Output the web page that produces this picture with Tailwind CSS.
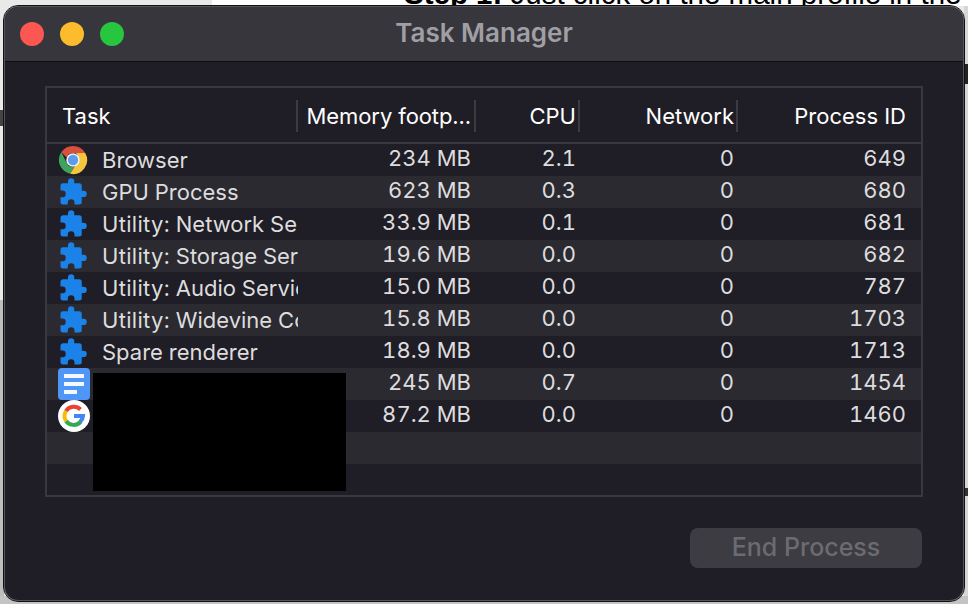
<!DOCTYPE html>
<html lang="en">

<head>
	<meta charset="UTF-8" />
	<title>Task Manager</title>
	<script src="https://cdn.jsdelivr.net/npm/@tailwindcss/browser@4"></script>
</head>

<body class="bg-[#e9e9e9] font-['Inter','Noto_Sans',sans-serif]">
	<svg class="hidden">
		<symbol id="puzzle" viewBox="0 0 24 24">
			<path fill="#1a82e8" d="M20.5 11H19V7a2 2 0 0 0-2-2h-4V3.5a2.5 2.5 0 0 0-5 0V5H4a2 2 0 0 0-2 2v3.8h1.5a2.7 2.7 0 0 1 0 5.4H2V20a2 2 0 0 0 2 2h3.8v-1.5a2.7 2.7 0 0 1 5.4 0V22H17a2 2 0 0 0 2-2v-4h1.5a2.5 2.5 0 0 0 0-5z" />
		</symbol>
	</svg>

	<div class="relative w-[968px] h-[604px] overflow-hidden">
		<!-- page behind the window -->
		<div class="absolute left-[212px] top-0 w-[756px] h-[6px] bg-white"></div>
		<div class="absolute left-[404px] top-[-23px] font-['Liberation_Sans'] text-[29.5px] leading-[34px] text-black whitespace-nowrap"><b>Step 1:</b> Just click on the main profile in the</div>
		<div class="absolute left-[964px] top-[6px] w-[4px] h-[598px] bg-[#d6d6d6]"></div>
		<div class="absolute left-0 top-[300px] w-[4px] h-[304px] bg-[#bdbdbd]"></div>
		<div class="absolute left-0 top-[596px] w-[968px] h-[8px] bg-[#c4c4c4]"></div>
		<div class="absolute left-[964px] top-[64px] w-[4px] h-[20px] bg-[#222]"></div>
		<div class="absolute left-[964px] top-[488px] w-[4px] h-[8px] bg-[#333]"></div>
		<div class="absolute left-0 top-[110px] w-[4px] h-[16px] bg-[#444]"></div>

		<!-- window -->
		<div class="absolute left-[4px] top-[6px] w-[960px] h-[595px] flex flex-col rounded-[14px] overflow-hidden bg-[#1f1d25] border border-[#55545a] outline outline-[#111]">
			<div class="relative h-[55px] flex items-center justify-center bg-[#37363c] border-b border-[#0c0c0e] shrink-0">
				<div class="absolute left-[15px] top-[15px] flex gap-[16px]">
					<span class="w-[24px] h-[24px] rounded-full bg-[#fc5753]"></span>
					<span class="w-[24px] h-[24px] rounded-full bg-[#fdbc2e]"></span>
					<span class="w-[24px] h-[24px] rounded-full bg-[#27c63f]"></span>
				</div>
				<span class="text-[26px] leading-[32px] pb-[2px] font-semibold text-[#a09fa3]">Task Manager</span>
			</div>

			<div class="relative flex-1 px-[40px] pt-[24px]">
				<div class="border-2 border-[#39383e] h-[411px] flex flex-col">
					<div class="h-[56px] pt-[2px] shrink-0 grid grid-cols-[251px_178px_104px_158px_1fr] items-center border-b-2 border-[#39383e] text-[22px] text-white">
						<div class="h-[32px] flex items-center pl-[15px] border-r-2 border-[#3c3b41]">Task</div>
						<div class="h-[32px] flex items-center justify-end pr-[3px] border-r-2 border-[#3c3b41] whitespace-nowrap tracking-[-0.1px]">Memory footp...</div>
						<div class="h-[32px] flex items-center justify-end pr-[2px] border-r-2 border-[#3c3b41]">CPU</div>
						<div class="h-[32px] flex items-center justify-end pr-[2px] border-r-2 border-[#3c3b41]">Network</div>
						<div class="h-[32px] flex items-center justify-end pr-[15px]">Process ID</div>
					</div>
					<div id="rows" class="flex-1 overflow-hidden"></div>
				</div>

				<!-- redaction over the last two task names -->
				<div class="absolute left-[88px] top-[311px] w-[253px] h-[118px] bg-black"></div>

				<div class="absolute left-[685px] top-[466px] w-[232px] h-[40px] rounded-[8px] bg-[#3d3c42] flex items-center justify-center text-[25px] font-medium text-[#6c6b70]">End Process</div>
			</div>
		</div>
	</div>

	<script>
		const CHROME = `<svg viewBox="0 0 32 32" class="w-[30px] h-[30px]">
			<path fill="#d9503f" d="M16 1a15 15 0 0 1 13 7.5H16a7.5 7.5 0 0 0-7 4.8L3.6 7.5A15 15 0 0 1 16 1z"/>
			<path fill="#3fa45b" d="M3.6 7.5 9.6 20a7.5 7.5 0 0 0 7.6 3.4L13 30.7A15 15 0 0 1 3.6 7.5z"/>
			<path fill="#f4c63d" d="M29 8.500A15 15 0 0 1 13 30.700L19.500 20a7.500 7.500 0 0 0-.5-11.500z"/>
			<circle cx="16" cy="16" r="7.200" fill="#f2f2f2"/>
			<circle cx="16" cy="16" r="5.500" fill="#5c9cec"/>
		</svg>`;
		const PUZZLE = `<svg class="w-[30px] h-[30px]"><use href="#puzzle"/></svg>`;
		const DOCS = `<svg viewBox="0 0 32 32" class="w-[32px] h-[32px]">
			<rect width="32" height="32" rx="4" fill="#4f97f7"/>
			<rect x="6" y="6" width="20" height="4" fill="#f4f8fe"/>
			<rect x="6" y="14" width="20" height="4" fill="#f4f8fe"/>
			<rect x="6" y="22" width="13" height="4" fill="#f4f8fe"/>
		</svg>`;
		const GOOGLE = `<svg viewBox="0 0 32 32" class="w-[32px] h-[32px]">
			<circle cx="16" cy="16" r="16" fill="#fff"/>
			<path d="M16 16h9a9 9 0 0 1-3 6" fill="none" stroke="#4285f4" stroke-width="4"/>
			<path d="M22.500 22A9.500 9.500 0 0 1 8 21" fill="none" stroke="#34a853" stroke-width="4"/>
			<path d="M8 21a9.500 9.500 0 0 1 0-10" fill="none" stroke="#fbbc05" stroke-width="4"/>
			<path d="M8 11a9.500 9.500 0 0 1 14.500-1.500" fill="none" stroke="#ea4335" stroke-width="4"/>
		</svg>`;
		// "Utility:" runs a little wider in the reference
		const UTIL = '<span class="tracking-[0.3px]">Utility:</span>';

		const ROWS = [
			[CHROME, 'Browser', '234 MB', '2.1', '0', '649'],
			[PUZZLE, 'GPU Process', '623 MB', '0.3', '0', '680'],
			[PUZZLE, `${UTIL} Network Service`, '33.9 MB', '0.1', '0', '681'],
			[PUZZLE, `${UTIL} Storage Service`, '19.6 MB', '0.0', '0', '682'],
			[PUZZLE, `${UTIL} Audio Service`, '15.0 MB', '0.0', '0', '787'],
			[PUZZLE, `${UTIL} Widevine Content`, '15.8 MB', '0.0', '0', '1703'],
			[PUZZLE, 'Spare renderer', '18.9 MB', '0.0', '0', '1713'],
			[DOCS, '', '245 MB', '0.7', '0', '1454'],
			[GOOGLE, '', '87.2 MB', '0.0', '0', '1460'],
			[null, '', '', '', '', ''],
			[null, '', '', '', '', ''],
		];

		document.getElementById('rows').innerHTML = ROWS.map((row, i) => `
			<div class="h-[32px] grid grid-cols-[251px_178px_104px_158px_1fr] grid-rows-[32px] items-center text-[22px] leading-[26px] text-[#dddcde] tabular-nums ${i % 2 ? 'bg-[#2b2a30]' : 'bg-[#1f1d25]'}">
				<div class="relative h-full flex items-center pl-[55px] overflow-hidden whitespace-pre">
					<span class="absolute left-[11px] top-0 h-full flex items-center">${row[0] || ''}</span>
					<span>${row[1]}</span>
				</div>
				<div class="text-right pr-[5px] pb-[4px]">${row[2]}</div>
				<div class="text-right pr-[4px] pb-[4px]">${row[3]}</div>
				<div class="text-right pr-[4px] pb-[4px]">${row[4]}</div>
				<div class="text-right pr-[15px] pb-[4px]">${row[5]}</div>
			</div>`).join('');
	</script>
</body>

</html>
